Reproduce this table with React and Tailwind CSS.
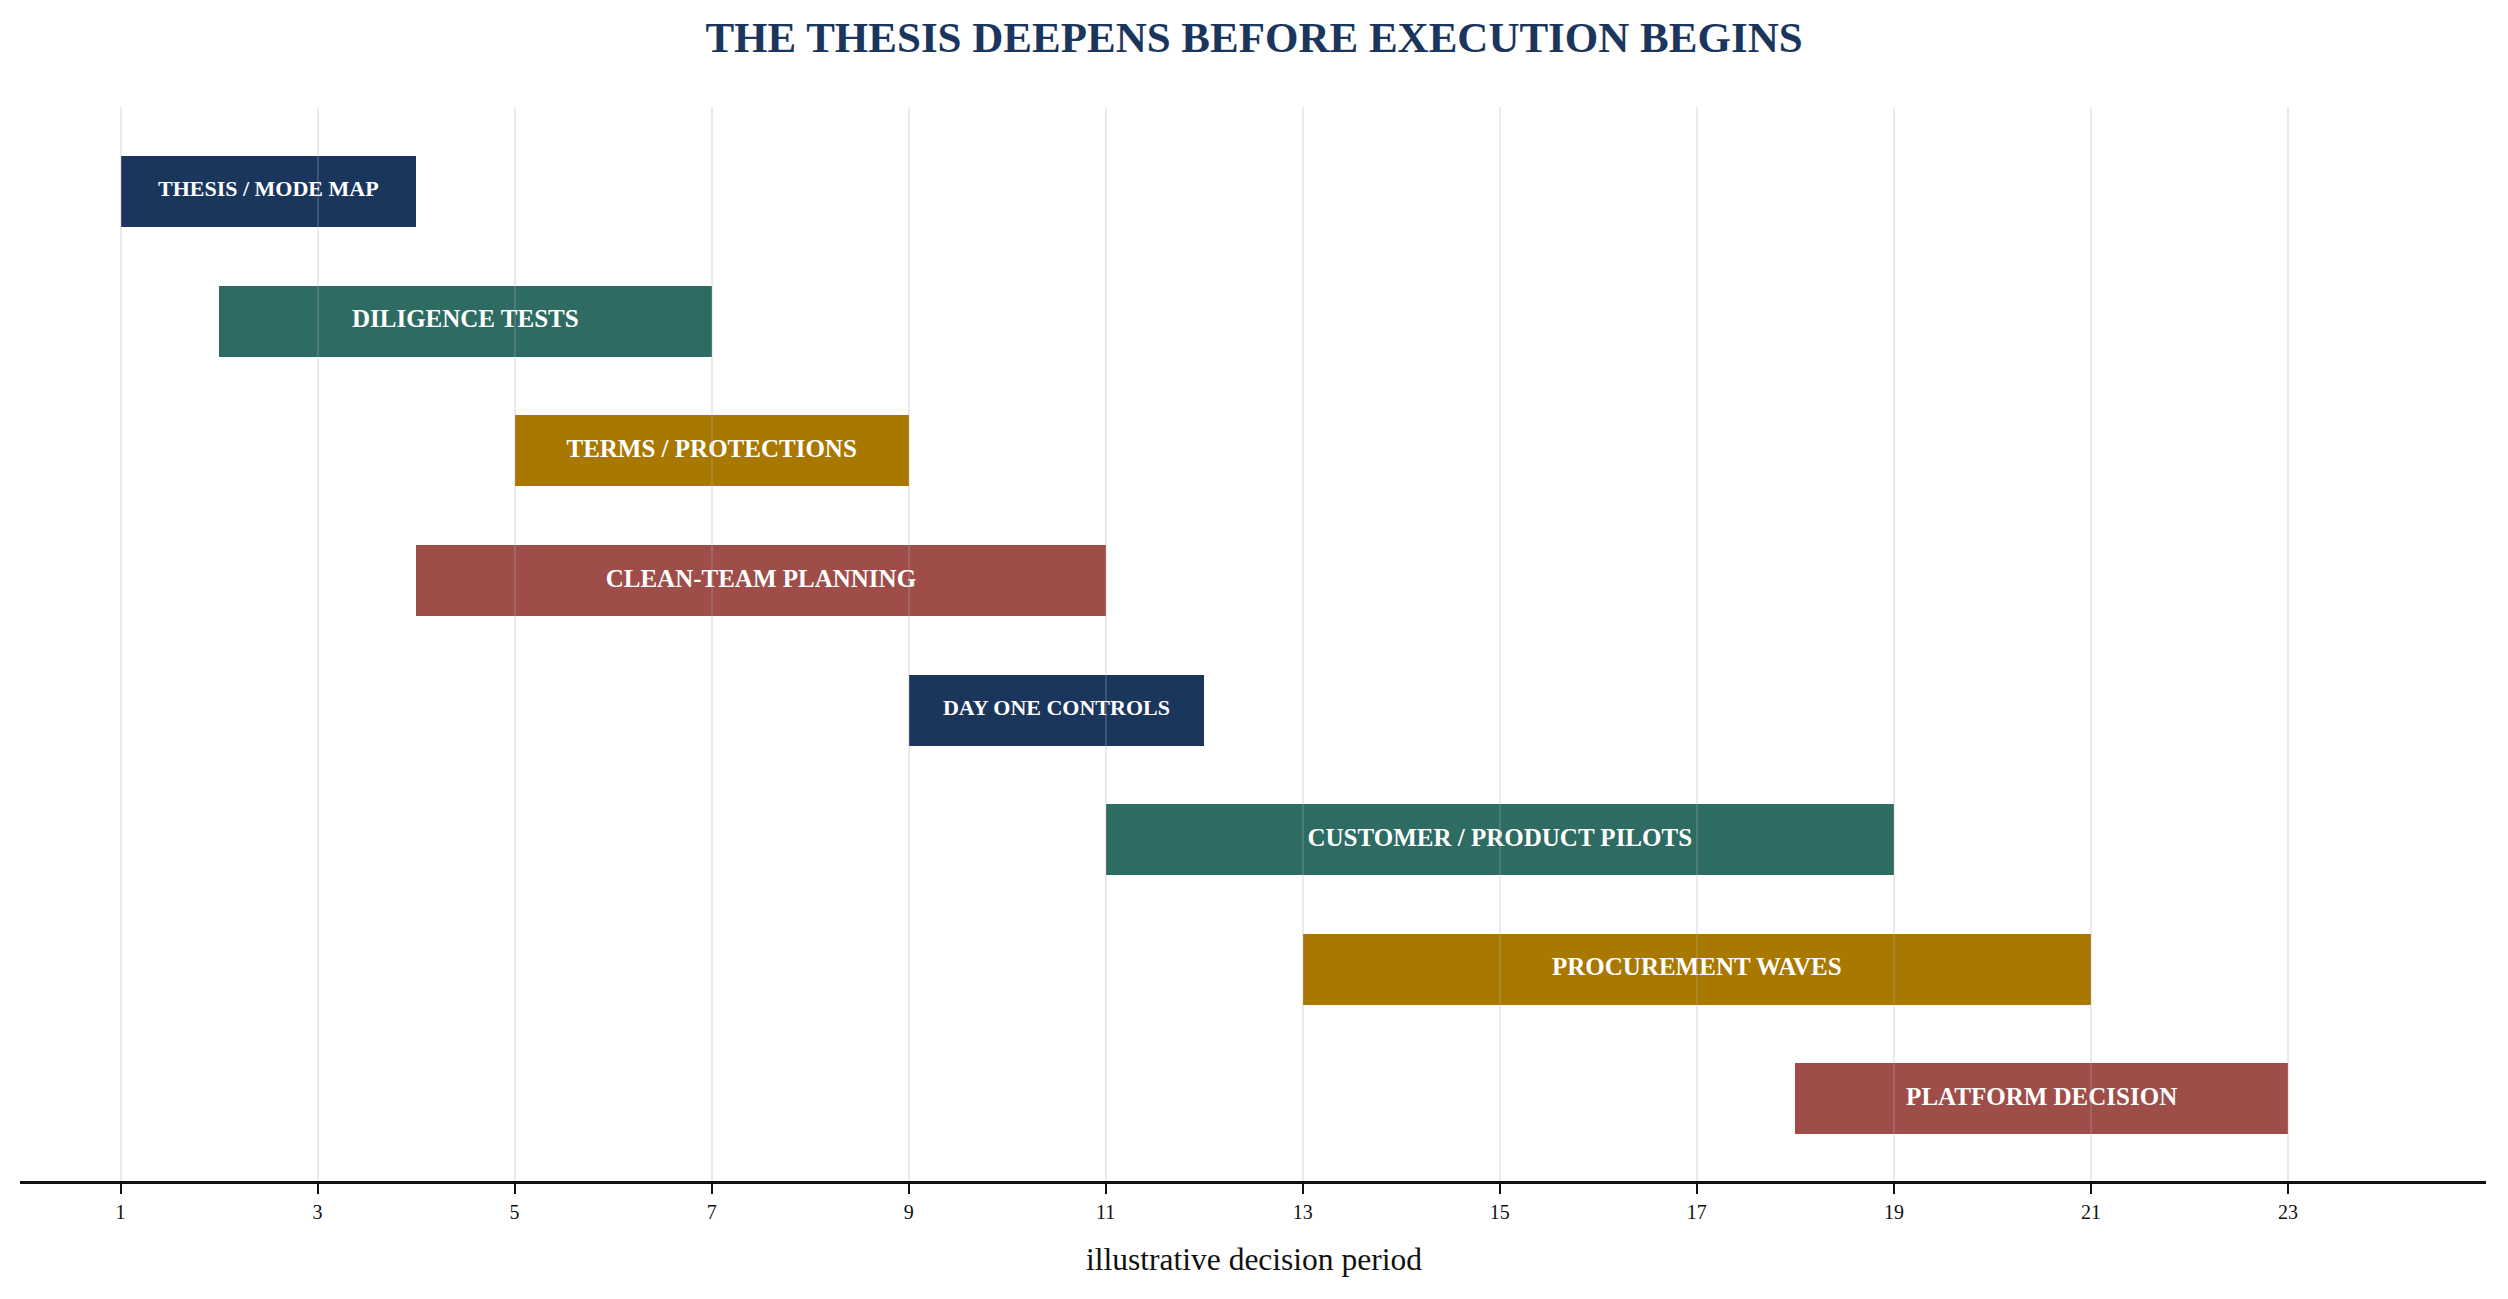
import * as React from "react";

// plot spans 0..25 on the x axis, 2463px wide
const UNIT = 2463 / 25;

const tasks = [
    { label: "THESIS / MODE MAP", start: 1, end: 4, color: "bg-[#1b365d]", size: "text-[22px]" },
    { label: "DILIGENCE TESTS", start: 2, end: 7, color: "bg-[#2e6b62]", size: "text-[25px]" },
    { label: "TERMS / PROTECTIONS", start: 5, end: 9, color: "bg-[#a87800]", size: "text-[25px]" },
    { label: "CLEAN-TEAM PLANNING", start: 4, end: 11, color: "bg-[#9e4d48]", size: "text-[25px]" },
    { label: "DAY ONE CONTROLS", start: 9, end: 12, color: "bg-[#1b365d]", size: "text-[22px]" },
    { label: "CUSTOMER / PRODUCT PILOTS", start: 11, end: 19, color: "bg-[#2e6b62]", size: "text-[25px]" },
    { label: "PROCUREMENT WAVES", start: 13, end: 21, color: "bg-[#a87800]", size: "text-[25px]" },
    { label: "PLATFORM DECISION", start: 18, end: 23, color: "bg-[#9e4d48]", size: "text-[25px]" },
];

const ticks = [1, 3, 5, 7, 9, 11, 13, 15, 17, 19, 21, 23];

const TaskRow = ({ task }) => (
    <div className="h-[129.6px] flex items-center">
        <div
            className={`${task.color} h-[71px] flex items-center justify-center pb-[5px]`}
            style={{ marginLeft: task.start * UNIT, width: (task.end - task.start) * UNIT }}
        >
            <span className={`${task.size} font-bold text-white leading-none whitespace-nowrap`}>
                {task.label}
            </span>
        </div>
    </div>
);

const App = () => {
    return (
        <div className="w-[2508px] h-[1299px] bg-white overflow-hidden flex flex-col font-['Liberation_Serif','Times_New_Roman',serif]">
            <h1 className="pt-[16px] text-center text-[43px] leading-none font-bold text-[#1b365d]">
                THE THESIS DEEPENS BEFORE EXECUTION BEGINS
            </h1>

            <div className="mt-[48px] ml-[22px] w-[2463px] h-[1074px] relative">
                <div className="pt-[20px] flex flex-col">
                    {tasks.map((t) => (
                        <TaskRow key={t.label} task={t} />
                    ))}
                </div>
                {/* gridlines sit over the bars, faint */}
                {ticks.map((t) => (
                    <div
                        key={t}
                        className="absolute top-0 bottom-0 w-[2px] bg-[rgba(175,175,175,0.25)] pointer-events-none"
                        style={{ left: t * UNIT - 1 }}
                    />
                ))}
            </div>

            <div className="ml-[20px] w-[2466px] h-[3px] bg-[#111]" />

            <div className="ml-[22px] w-[2463px] h-[10px] relative">
                {ticks.map((t) => (
                    <div key={t} className="absolute top-0 h-[10px] w-[2px] bg-[#111]" style={{ left: t * UNIT - 1 }} />
                ))}
            </div>

            <div className="mt-[8px] ml-[22px] w-[2463px] h-[20px] relative">
                {ticks.map((t) => (
                    <span
                        key={t}
                        className="absolute top-0 -translate-x-1/2 text-[20px] leading-none text-[#111]"
                        style={{ left: t * UNIT }}
                    >
                        {t}
                    </span>
                ))}
            </div>

            <div className="mt-[21.5px] text-center text-[31.5px] leading-none text-[#111]">
                illustrative decision period
            </div>
        </div>
    );
};

export default App;
